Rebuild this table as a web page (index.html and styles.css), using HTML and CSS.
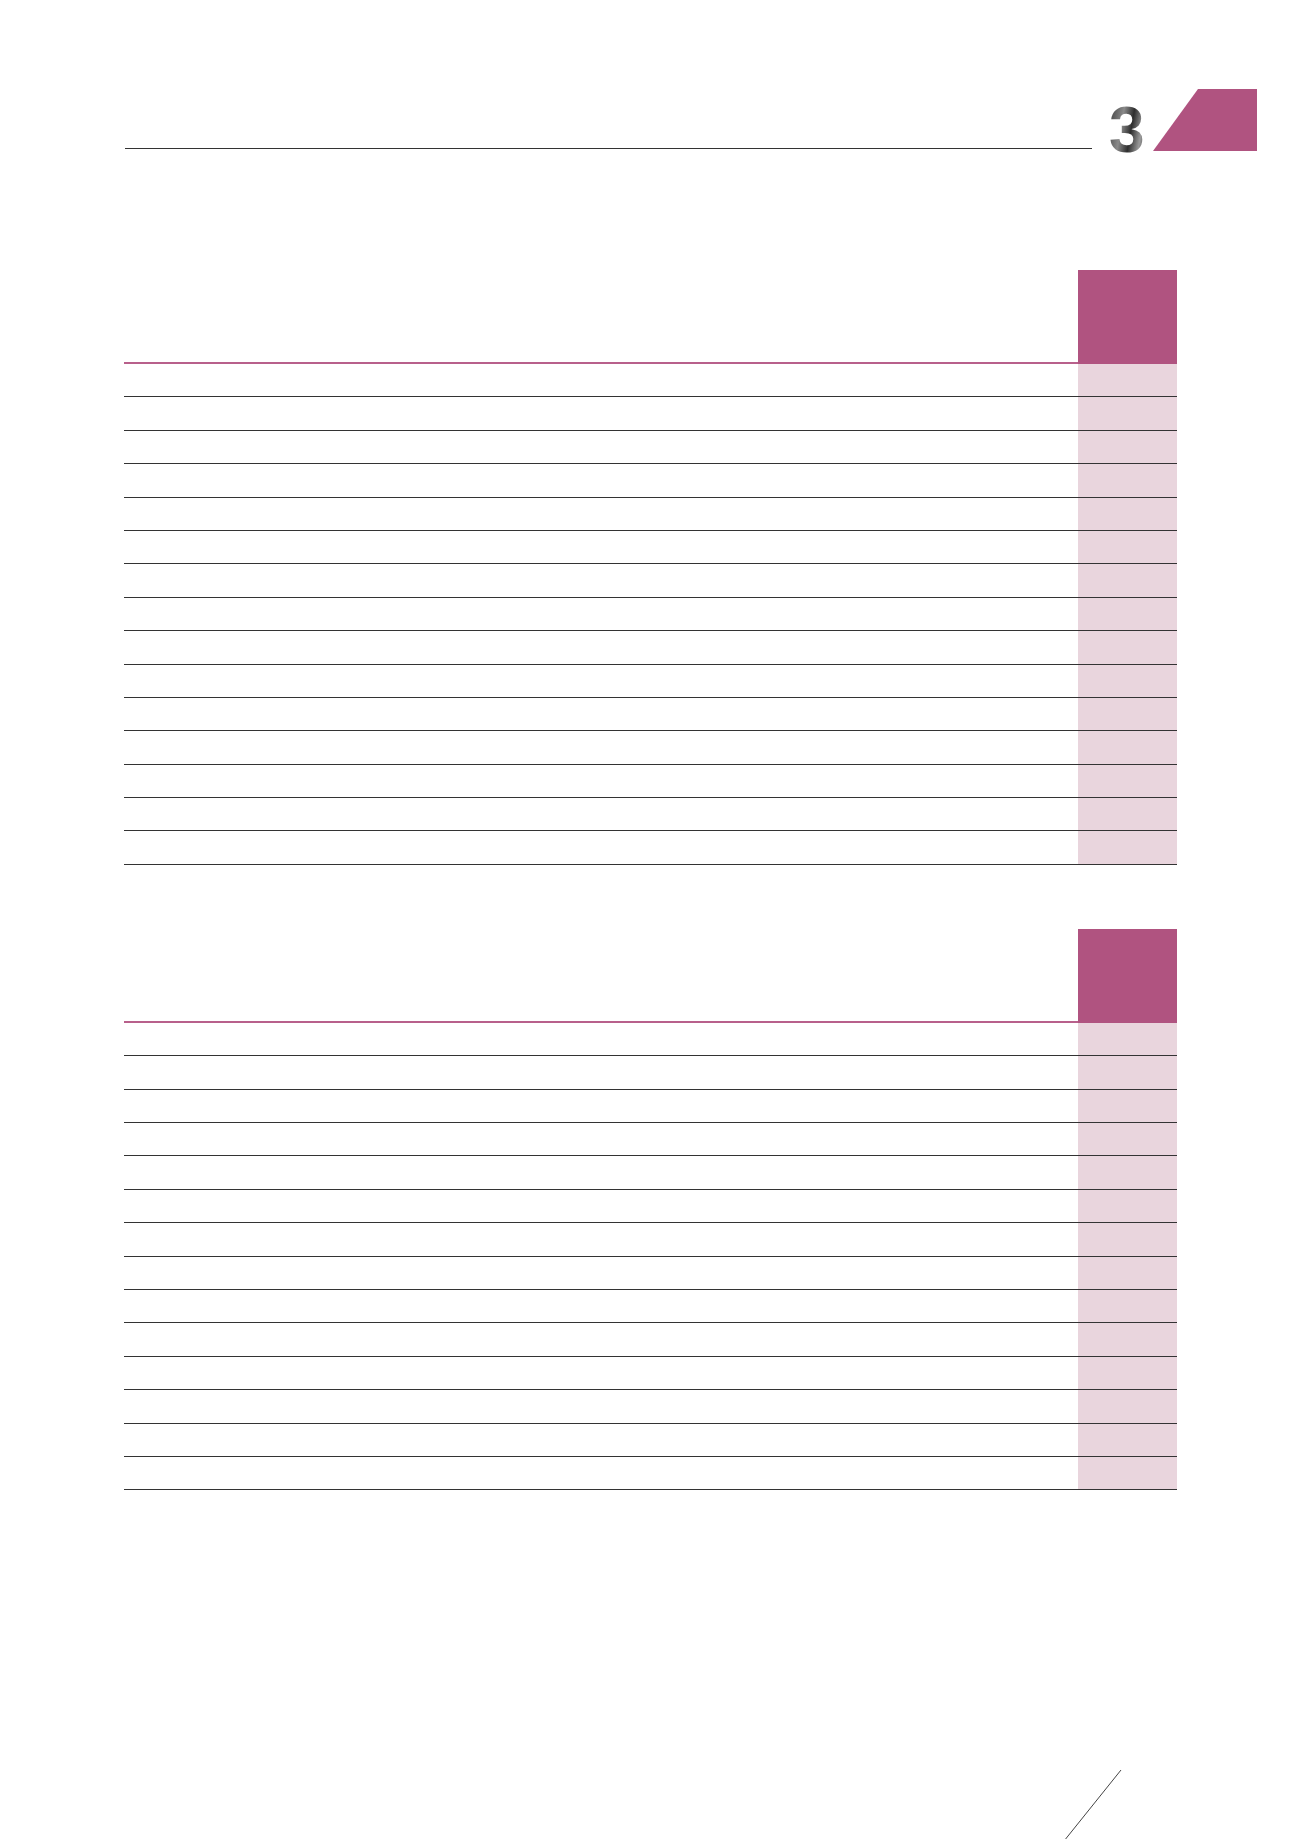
FILE: index.html
```html
<!DOCTYPE html>
<html lang="en">
<head>
<meta charset="utf-8">
<title>Chapter 3</title>
<link rel="stylesheet" href="styles.css">
</head>
<body>
<div class="page">
  <header class="top">
    <div class="rule"></div>
    <div class="num">3</div>
    <svg class="tab" width="104" height="62" viewBox="0 0 104 62">
      <polygon points="45,0 104,0 104,62 0,62" fill="#b05380"/>
    </svg>
  </header>

  <section class="table t1">
    <div class="head"><div></div><div></div><div></div><div></div><div></div><div></div><div class="hl"></div></div>
    <div class="row"><div></div><div></div><div></div><div></div><div></div><div></div><div class="hl"></div></div>
    <div class="row"><div></div><div></div><div></div><div></div><div></div><div></div><div class="hl"></div></div>
    <div class="row"><div></div><div></div><div></div><div></div><div></div><div></div><div class="hl"></div></div>
    <div class="row"><div></div><div></div><div></div><div></div><div></div><div></div><div class="hl"></div></div>
    <div class="row"><div></div><div></div><div></div><div></div><div></div><div></div><div class="hl"></div></div>
    <div class="row"><div></div><div></div><div></div><div></div><div></div><div></div><div class="hl"></div></div>
    <div class="row"><div></div><div></div><div></div><div></div><div></div><div></div><div class="hl"></div></div>
    <div class="row"><div></div><div></div><div></div><div></div><div></div><div></div><div class="hl"></div></div>
    <div class="row"><div></div><div></div><div></div><div></div><div></div><div></div><div class="hl"></div></div>
    <div class="row"><div></div><div></div><div></div><div></div><div></div><div></div><div class="hl"></div></div>
    <div class="row"><div></div><div></div><div></div><div></div><div></div><div></div><div class="hl"></div></div>
    <div class="row"><div></div><div></div><div></div><div></div><div></div><div></div><div class="hl"></div></div>
    <div class="row"><div></div><div></div><div></div><div></div><div></div><div></div><div class="hl"></div></div>
    <div class="row"><div></div><div></div><div></div><div></div><div></div><div></div><div class="hl"></div></div>
    <div class="row"><div></div><div></div><div></div><div></div><div></div><div></div><div class="hl"></div></div>
  </section>

  <section class="table t2">
    <div class="head"><div></div><div></div><div></div><div></div><div></div><div></div><div class="hl"></div></div>
    <div class="row"><div></div><div></div><div></div><div></div><div></div><div></div><div class="hl"></div></div>
    <div class="row"><div></div><div></div><div></div><div></div><div></div><div></div><div class="hl"></div></div>
    <div class="row"><div></div><div></div><div></div><div></div><div></div><div></div><div class="hl"></div></div>
    <div class="row"><div></div><div></div><div></div><div></div><div></div><div></div><div class="hl"></div></div>
    <div class="row"><div></div><div></div><div></div><div></div><div></div><div></div><div class="hl"></div></div>
    <div class="row"><div></div><div></div><div></div><div></div><div></div><div></div><div class="hl"></div></div>
    <div class="row"><div></div><div></div><div></div><div></div><div></div><div></div><div class="hl"></div></div>
    <div class="row"><div></div><div></div><div></div><div></div><div></div><div></div><div class="hl"></div></div>
    <div class="row"><div></div><div></div><div></div><div></div><div></div><div></div><div class="hl"></div></div>
    <div class="row"><div></div><div></div><div></div><div></div><div></div><div></div><div class="hl"></div></div>
    <div class="row"><div></div><div></div><div></div><div></div><div></div><div></div><div class="hl"></div></div>
    <div class="row"><div></div><div></div><div></div><div></div><div></div><div></div><div class="hl"></div></div>
    <div class="row"><div></div><div></div><div></div><div></div><div></div><div></div><div class="hl"></div></div>
    <div class="row"><div></div><div></div><div></div><div></div><div></div><div></div><div class="hl"></div></div>
  </section>

  <svg class="corner" width="60" height="75" viewBox="0 0 60 75">
    <line x1="57" y1="0" x2="0" y2="71" stroke="#444" stroke-width="1"/>
  </svg>
</div>
</body>
</html>
```

FILE: styles.css
```css
* { box-sizing: border-box; }
html, body { margin: 0; padding: 0; background: #fff; }
body { font-family: "Liberation Sans", Arial, sans-serif; }

.page {
  position: relative;
  width: 1300px;
  height: 1839px;
  overflow: hidden;
}

.top {
  display: flex;
  align-items: flex-end;
  margin-top: 89px;
  height: 62px;
  padding-left: 125px;
}
.rule {
  width: 967px;
  border-bottom: 1px solid #333;
  margin-bottom: 2px;
}
.num {
  margin-left: 17px;
  width: 44px;
  font-size: 64px;
  font-weight: bold;
  line-height: 50px;
  height: 50px;
  margin-bottom: -4px;
  background: linear-gradient(100deg, #3a3a3a 0%, #8a8a8a 30%, #2e2e2e 50%, #9a9a9a 70%, #444 85%);
  -webkit-background-clip: text;
  background-clip: text;
  color: transparent;
}
.tab { display: block; }

.table {
  margin-left: 124px;
  width: 1053px;
}
.t1 { margin-top: 119px; }
.t2 { margin-top: 64px; }

.head, .row {
  display: grid;
  grid-template-columns: 310px 99px 130px 123px 143px 149px 99px;
}
.head { height: 94px; }
.head > div { border-bottom: 2px solid #b8608b; }
.head > .hl { background: #b05380; border-bottom: 2px solid #b05380; }

.row {
  height: 33.4px;
  border-bottom: 1px solid #333;
}
.row > .hl { background: #e9d5dd; }

.corner {
  position: absolute;
  left: 1064px;
  top: 1770px;
}
```
